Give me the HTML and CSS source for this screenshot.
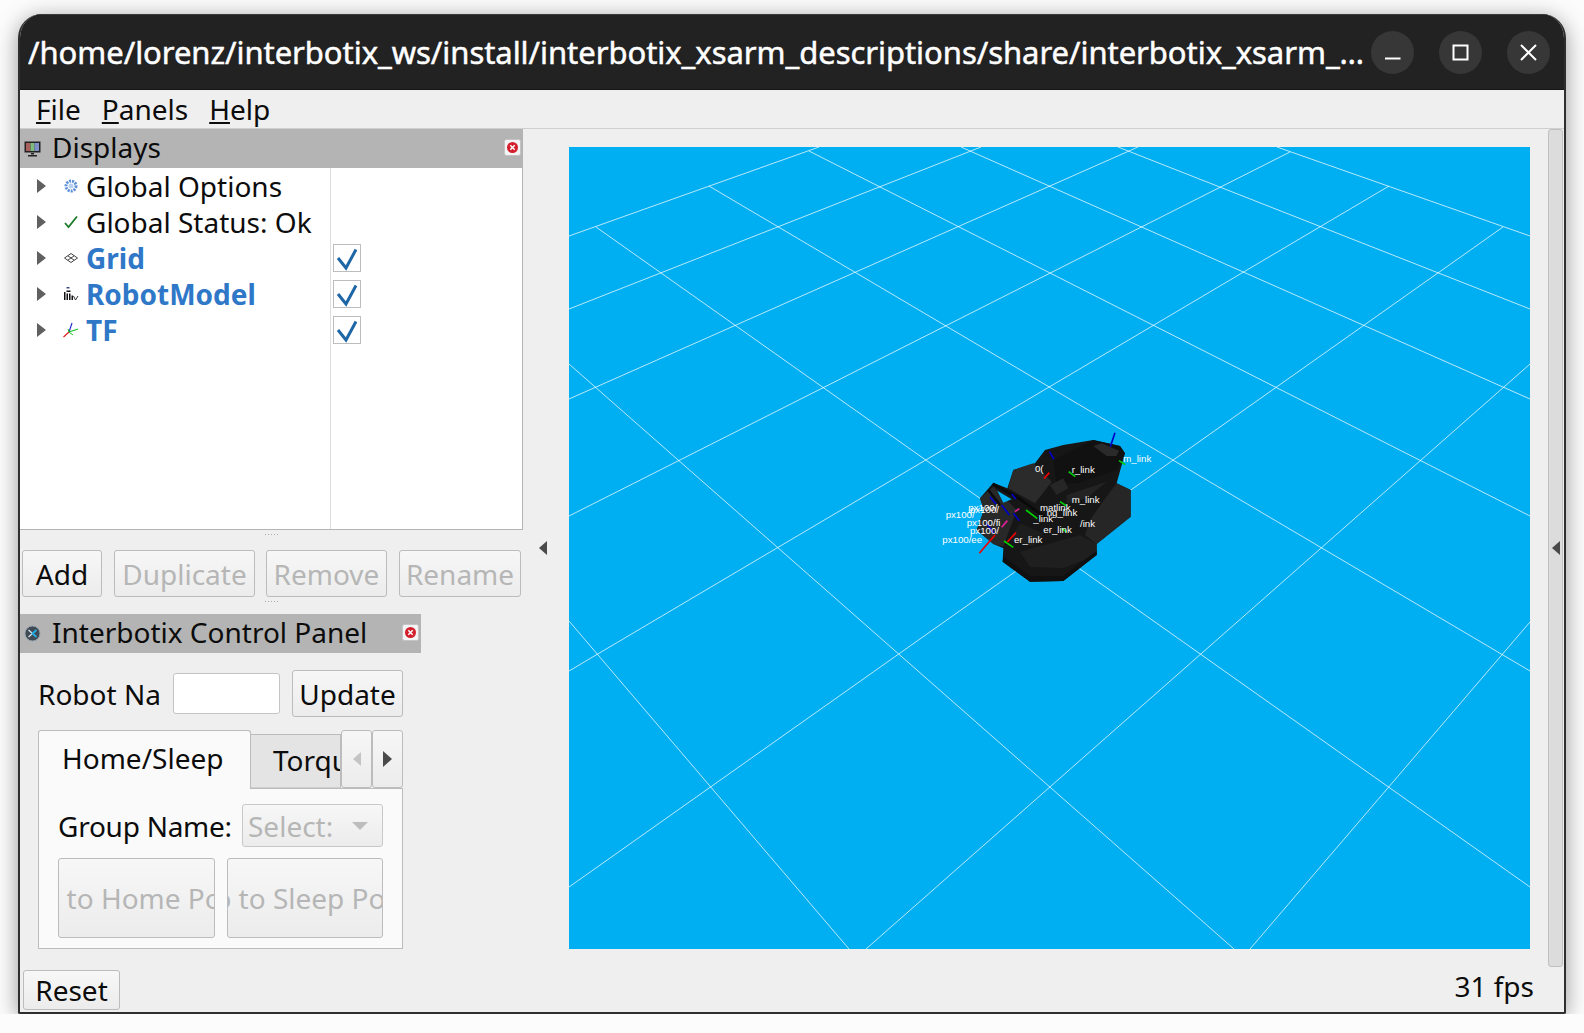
FILE: index.html
```html
<!DOCTYPE html>
<html lang="en">
<head>
    <meta charset="UTF-8">
    <title>RViz</title>
    <link rel="stylesheet" href="styles.css">
</head>
<body>
    <div class="window">
        <!-- title bar -->
        <div class="titlebar">
            <div class="title">/home/lorenz/interbotix_ws/install/interbotix_xsarm_descriptions/share/interbotix_xsarm_…</div>
            <div class="winbtn">
                <svg width="43" height="43" viewBox="0 0 43 43"><path d="M14 27.500h15.500" stroke="#fff" stroke-width="2" fill="none"/></svg>
            </div>
            <div class="winbtn">
                <svg width="43" height="43" viewBox="0 0 43 43"><rect x="14.500" y="14.500" width="14" height="14" stroke="#fff" stroke-width="2" fill="none"/></svg>
            </div>
            <div class="winbtn">
                <svg width="43" height="43" viewBox="0 0 43 43"><path d="M14 14l15 15M29 14l-15 15" stroke="#fff" stroke-width="2" fill="none"/></svg>
            </div>
        </div>

        <div class="menubar">
            <span class="menu"><u>F</u>ile</span>
            <span class="menu"><u>P</u>anels</span>
            <span class="menu"><u>H</u>elp</span>
        </div>

        <div class="main">
            <div class="side">
                <div class="dock-head">
                    <svg class="dock-icon" width="17" height="17" viewBox="0 0 17 17">
                        <rect x="0.500" y="1.500" width="16" height="11" fill="#222"/>
                        <rect x="2" y="3" width="4.500" height="8" fill="#a9605c"/>
                        <rect x="6.500" y="3" width="4" height="8" fill="#7fbb7c"/>
                        <rect x="10.500" y="3" width="4.500" height="8" fill="#7f8fc9"/>
                        <path d="M7 13h3v1.500H7zM4 15h9v1.500H4z" fill="#222"/>
                    </svg>
                    <span class="dock-title">Displays</span>
                    <svg class="close-icon" width="17" height="17" viewBox="0 0 17 17">
                        <rect x="0.500" y="0.500" width="16" height="16" rx="2" fill="#f4f4f4" stroke="#c4c4c4"/>
                        <circle cx="8.500" cy="8.500" r="5.500" fill="#d3202c"/>
                        <path d="M6.300 6.300l4.400 4.400M10.700 6.300l-4.400 4.400" stroke="#fff" stroke-width="1.500"/>
                    </svg>
                </div>

                <div class="tree">
                    <div class="tree-row">
                        <div class="tree-name">
                            <span class="expander"></span>
                            <svg class="row-icon" width="16" height="16" viewBox="0 0 16 16">
                                <circle cx="8" cy="8" r="5" fill="none" stroke="#5d8fd6" stroke-width="3" stroke-dasharray="2 1"/>
                                <circle cx="8" cy="8" r="2.500" fill="#b9d0f0"/>
                            </svg>
                            <span class="item">Global Options</span>
                        </div>
                        <div class="tree-value"></div>
                    </div>
                    <div class="tree-row">
                        <div class="tree-name">
                            <span class="expander"></span>
                            <svg class="row-icon" width="16" height="16" viewBox="0 0 16 16">
                                <path d="M2 9l3.500 4L14 2.500" fill="none" stroke="#1e7a2c" stroke-width="1.800"/>
                            </svg>
                            <span class="item">Global Status: Ok</span>
                        </div>
                        <div class="tree-value"></div>
                    </div>
                    <div class="tree-row">
                        <div class="tree-name">
                            <span class="expander"></span>
                            <svg class="row-icon" width="16" height="16" viewBox="0 0 16 16">
                                <path d="M8 3.500L14.500 8 8 12.500 1.500 8zM4.800 5.800L11.200 10.200M11.200 5.800L4.800 10.200" fill="none" stroke="#444" stroke-width="1"/>
                            </svg>
                            <span class="item on">Grid</span>
                        </div>
                        <div class="tree-value"><span class="check"><svg width="26" height="26" viewBox="0 0 26 26"><path d="M4 13l8 10L22 4.500" fill="none" stroke="#1f66a6" stroke-width="3"/></svg></span></div>
                    </div>
                    <div class="tree-row">
                        <div class="tree-name">
                            <span class="expander"></span>
                            <svg class="row-icon" width="16" height="16" viewBox="0 0 16 16">
                                <path d="M3.500 1h3v1.500h-3z" fill="#3a4a80"/>
                                <path d="M1 6h1.500v8H1zM3.500 4.500h4V6h-4zM3.500 7.500h1.500V14H3.500zM6 7.500h1.500V14H6zM8.500 9.500H10V14H8.500z" fill="#111"/>
                                <path d="M10.500 10l2 4 2.500-4" fill="none" stroke="#333" stroke-width="1"/>
                            </svg>
                            <span class="item on">RobotModel</span>
                        </div>
                        <div class="tree-value"><span class="check"><svg width="26" height="26" viewBox="0 0 26 26"><path d="M4 13l8 10L22 4.500" fill="none" stroke="#1f66a6" stroke-width="3"/></svg></span></div>
                    </div>
                    <div class="tree-row">
                        <div class="tree-name">
                            <span class="expander"></span>
                            <svg class="row-icon" width="16" height="16" viewBox="0 0 16 16">
                                <path d="M6 10L9 1" stroke="#2233cc" stroke-width="1.200" fill="none"/>
                                <path d="M6 10l9-3" stroke="#18c022" stroke-width="1.200" fill="none"/>
                                <path d="M6 10l-5.500 5" stroke="#e02020" stroke-width="1.200" fill="none"/>
                                <path d="M6 10l-1-3M6 10l4 3" stroke="#18c022" stroke-width="1" fill="none"/>
                            </svg>
                            <span class="item on">TF</span>
                        </div>
                        <div class="tree-value"><span class="check"><svg width="26" height="26" viewBox="0 0 26 26"><path d="M4 13l8 10L22 4.500" fill="none" stroke="#1f66a6" stroke-width="3"/></svg></span></div>
                    </div>
                </div>

                <div class="grip"></div>

                <div class="tool-row">
                    <button class="btn btn-add">Add</button>
                    <button class="btn btn-dup" disabled>Duplicate</button>
                    <button class="btn btn-rem" disabled>Remove</button>
                    <button class="btn btn-ren" disabled>Rename</button>
                </div>

                <div class="grip grip-low"></div>

                <div class="dock-head panel-head">
                    <svg class="dock-icon" width="17" height="17" viewBox="0 0 17 17">
                        <circle cx="8.500" cy="8.500" r="7.500" fill="#3f4a54" stroke="#98a2aa"/>
                        <path d="M4.500 5l4 3.500-4 3.500" fill="none" stroke="#d8e4ea" stroke-width="1.300"/>
                        <path d="M12.500 5l-4 3.500 4 3.500" fill="none" stroke="#22aee8" stroke-width="1.800"/>
                    </svg>
                    <span class="dock-title">Interbotix Control Panel</span>
                    <svg class="close-icon" width="17" height="17" viewBox="0 0 17 17">
                        <rect x="0.500" y="0.500" width="16" height="16" rx="2" fill="#f4f4f4" stroke="#c4c4c4"/>
                        <circle cx="8.500" cy="8.500" r="5.500" fill="#d3202c"/>
                        <path d="M6.300 6.300l4.400 4.400M10.700 6.300l-4.400 4.400" stroke="#fff" stroke-width="1.500"/>
                    </svg>
                </div>

                <div class="panel">
                    <div class="robot-row">
                        <span class="label robot-label">Robot Na</span>
                        <div class="field"></div>
                        <button class="btn btn-update">Update</button>
                    </div>

                    <div class="tabs">
                        <div class="tabbar">
                            <div class="tab active">Home/Sleep</div>
                            <div class="tab">Torque</div>
                            <div class="scroll-btn"><span class="arrow-l off"></span></div>
                            <div class="scroll-btn"><span class="arrow-r"></span></div>
                        </div>
                        <div class="pane">
                            <div class="group-row">
                                <span class="label group-label">Group Name:</span>
                                <div class="combo">
                                    <span>Select:</span>
                                    <span class="arrow-d"></span>
                                </div>
                            </div>
                            <div class="pose-row">
                                <button class="btn pose pose-home" disabled>Go to Home Pose</button>
                                <button class="btn pose pose-sleep" disabled>Go to Sleep Pose</button>
                            </div>
                        </div>
                    </div>
                </div>
            </div>

            <div class="gutter"><span class="arrow-l"></span></div>

            <div class="view">
                <svg width="961" height="802" viewBox="0 0 961 802">
                    <g class="grid-lines">
                        <line x1="0" y1="89" x2="250" y2="0"/>
                        <line x1="0" y1="162" x2="412" y2="0"/>
                        <line x1="0" y1="252" x2="569" y2="0"/>
                        <line x1="0" y1="369" x2="721" y2="5"/>
                        <line x1="0" y1="524" x2="820" y2="39"/>
                        <line x1="0" y1="740" x2="934" y2="80"/>
                        <line x1="297" y1="802" x2="961" y2="217"/>
                        <line x1="681" y1="802" x2="961" y2="475"/>
                        <line x1="0" y1="474" x2="280" y2="802"/>
                        <line x1="0" y1="217" x2="665" y2="802"/>
                        <line x1="27" y1="80" x2="961" y2="740"/>
                        <line x1="140" y1="39" x2="961" y2="524"/>
                        <line x1="240" y1="4" x2="961" y2="369"/>
                        <line x1="392" y1="0" x2="961" y2="252"/>
                        <line x1="549" y1="0" x2="961" y2="162"/>
                        <line x1="708" y1="0" x2="961" y2="89"/>
                    </g>
                    <!-- robot, drawn in 3x units -->
                    <g transform="translate(351 273) scale(.3333)">
                        <polygon fill="#161616" points="248,425 330,485 430,483 530,405 530,372 632,290 632,210 590,190 615,100 600,78 520,60 430,75 375,90 345,130 280,150 262,205 220,188 180,235 192,270 170,330 220,372 250,385"/>
                        <polygon fill="#262626" points="590,190 632,210 632,290 530,372 495,345 510,300 545,250"/>
                        <polygon fill="#1f1f1f" points="300,395 480,345 530,372 530,405 430,445 330,440"/>
                        <polygon fill="#101010" points="248,425 330,485 430,483 530,405 530,392 430,468 330,468 250,408"/>
                        <polygon fill="#2b2b2b" points="280,150 340,130 395,185 345,250 265,205"/>
                        <polygon fill="#111111" points="400,120 520,60 600,78 615,100 590,150 470,190 410,190"/>
                        <polygon fill="#2a2a2a" points="520,78 545,70 597,92 590,108 560,108"/>
                        <polygon fill="#262626" points="390,195 430,175 445,205 410,225"/>
                        <polygon fill="#232323" points="440,225 560,185 500,235 440,250"/>
                        <polygon fill="#282828" points="180,235 220,200 290,270 250,380 220,372 170,330 192,270"/>
                        <polygon fill="#1d1d1d" points="300,310 370,340 340,380 270,355"/>
                        <polyline fill="none" stroke="#0a0a0a" stroke-width="9" points="218,192 290,230 392,305"/>
                        <polyline fill="none" stroke="#0a0a0a" stroke-width="7" points="205,210 240,255"/>
                        <polygon fill="#00aff2" points="232,212 275,238 250,248"/>
                        <line class="ax-b" x1="585" y1="38" x2="571" y2="80"/>
                        <line class="ax-b" x1="388" y1="94" x2="402" y2="118"/>
                        <line class="ax-b" x1="210" y1="230" x2="228" y2="252"/>
                        <line class="ax-b" x1="275" y1="222" x2="288" y2="238"/>
                        <line class="ax-b" x1="245" y1="255" x2="268" y2="285"/>
                        <line class="ax-b" x1="280" y1="280" x2="298" y2="302"/>
                        <line class="ax-b" x1="198" y1="308" x2="222" y2="340"/>
                        <line class="ax-g" x1="597" y1="122" x2="616" y2="134"/>
                        <line class="ax-g" x1="446" y1="155" x2="466" y2="170"/>
                        <line class="ax-g" x1="420" y1="245" x2="440" y2="258"/>
                        <line class="ax-g" x1="318" y1="270" x2="352" y2="296"/>
                        <line class="ax-g" x1="425" y1="325" x2="440" y2="336"/>
                        <line class="ax-g" x1="252" y1="363" x2="280" y2="382"/>
                        <line class="ax-r" x1="388" y1="158" x2="372" y2="176"/>
                        <line class="ax-r" x1="225" y1="345" x2="178" y2="400"/>
                        <line class="ax-r" x1="288" y1="338" x2="262" y2="366"/>
                        <line class="ax-m" x1="285" y1="275" x2="298" y2="266"/>
                        <line class="ax-m" x1="262" y1="302" x2="245" y2="322"/>
                        <text class="tf-label" x="610" y="125">m_link</text>
                        <text class="tf-label" x="455" y="158">r_link</text>
                        <text class="tf-label" x="455" y="248">m_link</text>
                        <text class="tf-label" x="345" y="155">0(</text>
                        <text class="tf-label" x="360" y="274">matlink</text>
                        <text class="tf-label" x="380" y="287">ng_link</text>
                        <text class="tf-label" x="340" y="305">_link</text>
                        <text class="tf-label" x="480" y="322">/ink</text>
                        <text class="tf-label" x="370" y="340">er_link</text>
                        <text class="tf-label" x="282" y="368">er_link</text>
                        <text class="tf-label" x="145" y="272">px100/</text>
                        <text class="tf-label" x="150" y="280">px100/</text>
                        <text class="tf-label" x="77" y="295">px100/</text>
                        <text class="tf-label" x="140" y="317">px100/fi</text>
                        <text class="tf-label" x="150" y="342">px100/</text>
                        <text class="tf-label" x="67" y="369">px100/ee</text>
                    </g>
                </svg>
            </div>

            <div class="gutter-r"></div>
            <div class="handle"><span class="arrow-l"></span></div>
        </div>

        <div class="statusbar">
            <button class="btn btn-reset">Reset</button>
            <span class="fps">31 fps</span>
        </div>
    </div>
</body>
</html>
```

FILE: styles.css
```css
body {
    margin: 0;
    background-color: #fcfcfc;
    font-family: "Noto Sans", sans-serif;
    font-size: 28px;
    color: #0c0c0c;
}

.window {
    width: 1548px;
    height: 1000px;
    margin: 14px 0 0 18px;
    box-sizing: border-box;
    display: flex;
    flex-direction: column;
    background-color: #efefef;
    border: 2px solid #2e2e2e;
    border-top: none;
    border-radius: 24px 24px 2px 2px;
    box-shadow: 0 4px 22px rgba(0, 0, 0, 0.4);
    overflow: hidden;
}

.titlebar {
    height: 76px;
    flex: none;
    display: flex;
    align-items: center;
    box-sizing: border-box;
    padding: 0 14px 0 8px;
    gap: 25px;
    background-color: #222222;
    border-top: 1px solid #3a3a3a;
    border-bottom: 1px solid #161616;
}

.title {
    flex: 1;
    min-width: 0;
    color: white;
    font-size: 31px;
    letter-spacing: -0.05px;
    -webkit-text-stroke: 0.5px white;
    white-space: nowrap;
    overflow: hidden;
    margin-right: -20px;
}

.winbtn {
    width: 43px;
    height: 43px;
    flex: none;
    border-radius: 50%;
    background-color: #373737;
}

.winbtn svg {
    display: block;
}

.menubar {
    height: 39px;
    flex: none;
    box-sizing: border-box;
    display: flex;
    align-items: center;
    padding-left: 16px;
    gap: 21px;
    border-bottom: 1px solid #cfcfcf;
}

.main {
    height: 837px;
    flex: none;
    display: flex;
}

.side {
    width: 503px;
    flex: none;
}

.dock-head {
    height: 39px;
    display: flex;
    align-items: center;
    background-color: #b4b4b4;
}

.dock-icon {
    margin-left: 4px;
    margin-right: 11px;
    flex: none;
}

.dock-title {
    flex: 1;
    margin-bottom: 3px;
}

.close-icon {
    margin-right: 2px;
    margin-bottom: 3px;
}

.panel-head {
    width: 401px;
}

.tree {
    height: 362px;
    box-sizing: border-box;
    background-color: white;
    border-right: 1px solid #b4b4b4;
    border-bottom: 1px solid #b4b4b4;
    display: flex;
    flex-direction: column;
    background-image: linear-gradient(#dedede, #dedede);
    background-size: 1px 100%;
    background-position: 310px 0;
    background-repeat: no-repeat;
}

.tree-row {
    height: 36px;
    flex: none;
    display: flex;
    align-items: center;
}

.tree-name {
    width: 311px;
    display: flex;
    align-items: center;
    white-space: nowrap;
}

.tree-value {
    padding-left: 2px;
    display: flex;
}

.expander {
    width: 0;
    height: 0;
    margin-left: 17px;
    margin-right: 17px;
    border-left: 9px solid #606060;
    border-top: 7px solid transparent;
    border-bottom: 7px solid transparent;
}

.row-icon {
    flex: none;
    margin-right: 7px;
}

.on {
    font-weight: 700;
    color: #2f78c8;
}

.check {
    width: 28px;
    height: 28px;
    box-sizing: border-box;
    border: 1px solid #bdbdbd;
    background-color: white;
}

.check svg {
    display: block;
}

.grip {
    width: 16px;
    height: 20px;
    margin-left: 244px;
    background-image: radial-gradient(circle, #a8a8a8 0.6px, transparent 0.8px);
    background-size: 3px 3px;
    background-repeat: repeat-x;
    background-position: 0 3px;
}

.grip-low {
    height: 17px;
}

.tool-row {
    height: 47px;
    display: flex;
}

.btn {
    font-family: inherit;
    font-size: 28px;
    color: #0c0c0c;
    padding: 0;
    background-image: linear-gradient(#f7f7f7, #ececec);
    border: 1px solid #bcbcbc;
    border-radius: 3px;
    white-space: nowrap;
    overflow: hidden;
}

.btn:disabled {
    color: #b6b6b6;
}

.btn-add {
    width: 80px;
    margin-left: 2px;
}

.btn-dup {
    width: 141px;
    margin-left: 12px;
}

.btn-rem {
    width: 121px;
    margin-left: 11px;
}

.btn-ren {
    width: 122px;
    margin-left: 12px;
}

.panel {
    width: 401px;
    box-sizing: border-box;
    padding: 17px 0 0 18px;
}

.robot-row {
    display: flex;
    align-items: center;
    height: 47px;
}

.robot-label {
    width: 135px;
}

.field {
    width: 107px;
    height: 41px;
    box-sizing: border-box;
    background-color: white;
    border: 1px solid #c4c4c4;
    border-radius: 3px;
}

.btn-update {
    width: 111px;
    height: 47px;
    margin-left: 12px;
}

.tabs {
    width: 365px;
    margin-top: 13px;
}

.tabbar {
    height: 58px;
    display: flex;
    align-items: flex-end;
}

.tab {
    height: 54px;
    box-sizing: border-box;
    display: flex;
    align-items: center;
    overflow: hidden;
    white-space: nowrap;
    background-color: #e4e4e4;
    border: 1px solid #bcbcbc;
    border-left: none;
    border-bottom: 1px solid #cfcfcf;
    width: 90px;
    padding: 0 0 3px 22px;
}

.tab.active {
    width: 213px;
    height: 59px;
    margin-bottom: -1px;
    position: relative;
    padding: 0 0 5px 23px;
    background-color: #fafafa;
    border: 1px solid #bcbcbc;
    border-bottom: none;
    border-radius: 3px 3px 0 0;
}

.scroll-btn {
    width: 31px;
    height: 58px;
    flex: none;
    box-sizing: border-box;
    display: flex;
    align-items: center;
    justify-content: center;
    background-image: linear-gradient(#f6f6f6, #ececec);
    border: 1px solid #bcbcbc;
    border-radius: 3px;
}

.arrow-l {
    width: 0;
    height: 0;
    border-right: 8px solid #4a4a4a;
    border-top: 7px solid transparent;
    border-bottom: 7px solid transparent;
}

.arrow-l.off {
    border-right-color: #c4c4c4;
}

.arrow-r {
    width: 0;
    height: 0;
    border-left: 9px solid #4a4a4a;
    border-top: 8px solid transparent;
    border-bottom: 8px solid transparent;
}

.arrow-d {
    width: 0;
    height: 0;
    border-top: 8px solid #bdbdbd;
    border-left: 8px solid transparent;
    border-right: 8px solid transparent;
}

.pane {
    height: 161px;
    box-sizing: border-box;
    background-color: #fafafa;
    border: 1px solid #bcbcbc;
    padding: 15px 19px 0 19px;
}

.group-row {
    height: 43px;
    display: flex;
    align-items: center;
}

.group-label {
    width: 184px;
    white-space: nowrap;
    letter-spacing: -0.25px;
}

.combo {
    width: 141px;
    height: 43px;
    box-sizing: border-box;
    display: flex;
    align-items: center;
    justify-content: space-between;
    padding: 0 14px 0 5px;
    color: #b6b6b6;
    background-image: linear-gradient(#f7f7f7, #ececec);
    border: 1px solid #c8c8c8;
    border-radius: 3px;
}

.pose-row {
    display: flex;
    justify-content: space-between;
    margin-top: 11px;
}

.pose {
    height: 80px;
    text-align: left;
}

.pose-home {
    width: 157px;
    text-indent: -37px;
}

.pose-sleep {
    width: 156px;
    text-indent: -34px;
}

.gutter {
    width: 46px;
    flex: none;
    display: flex;
    align-items: center;
    justify-content: center;
    box-sizing: border-box;
    padding-right: 6px;
}

.view {
    width: 961px;
    height: 802px;
    margin-top: 18px;
    flex: none;
    background-color: #00aff2;
}

.view svg {
    display: block;
}

.grid-lines line {
    stroke: #ffffff;
    stroke-opacity: 0.72;
    stroke-width: 1;
}

.ax-b, .ax-g, .ax-r, .ax-m {
    stroke-width: 5;
}

.ax-b {
    stroke: #0000c8;
}

.ax-g {
    stroke: #00d000;
}

.ax-r {
    stroke: #f00000;
}

.ax-m {
    stroke: #e0209a;
}

.tf-label {
    fill: white;
    font-family: "Liberation Sans", sans-serif;
    font-size: 29px;
}

.gutter-r {
    width: 18px;
    flex: none;
}

.handle {
    width: 15px;
    height: 838px;
    flex: none;
    box-sizing: border-box;
    display: flex;
    align-items: center;
    justify-content: center;
    background-color: #dcdcdc;
    border: 1px solid #c0c0c0;
    border-radius: 3px;
}

.statusbar {
    flex: 1;
    display: flex;
    align-items: flex-end;
    justify-content: space-between;
    padding: 0 30px 2px 3px;
}

.btn-reset {
    width: 97px;
    height: 40px;
}

.fps {
    margin-bottom: 5px;
}
```
